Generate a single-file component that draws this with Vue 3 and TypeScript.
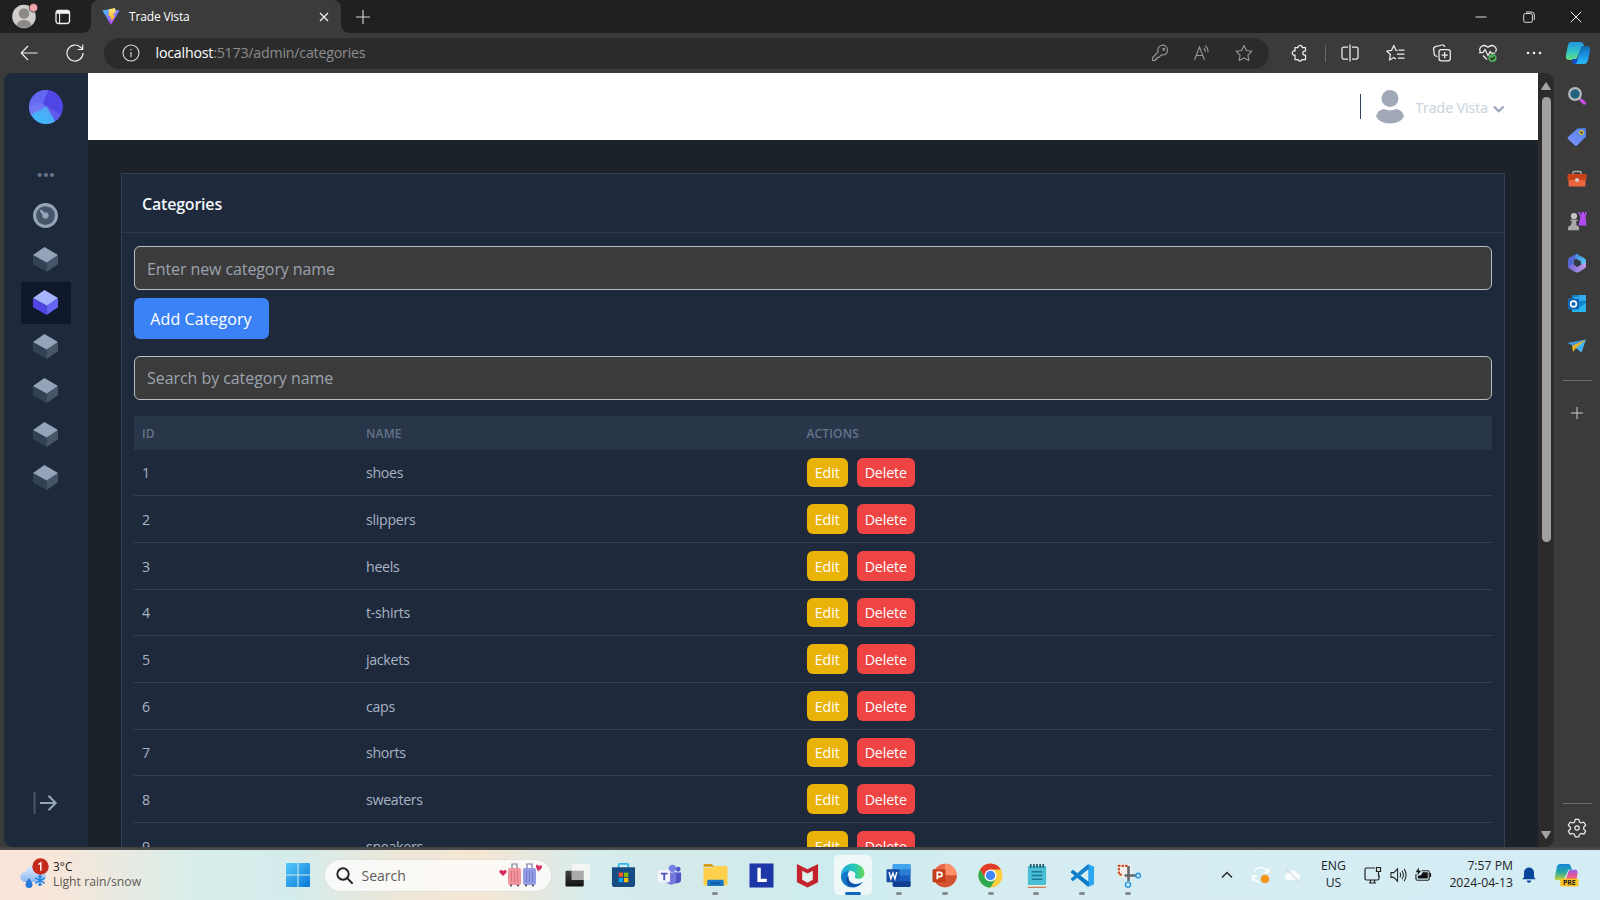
<script setup lang="ts">
interface Category {
  id: number
  name: string
}

const categories: Category[] = [
  'shoes', 'slippers', 'heels', 't-shirts', 'jackets', 'caps', 'shorts', 'sweaters', 'sneakers',
].map((name, index) => ({ id: index + 1, name }))

const navCubes = [false, true, false, false, false, false]
</script>

<template>
  <div class="screen">
    <header class="titlebar">
      <svg class="profile" width="26" height="26" viewBox="0 0 26 26">
        <circle cx="12" cy="13.5" r="11.8" fill="#d0cecc" />
        <circle cx="12" cy="10.5" r="5.2" fill="#8b8886" />
        <path d="M4.5 22.3a7.6 6.5 0 0 1 15 0 11.8 11.8 0 0 1-15 0z" fill="#8b8886" />
        <circle cx="21.5" cy="4.8" r="4.3" fill="#f1a5a8" stroke="#202020" stroke-width=".7" />
      </svg>
      <svg class="workspaces" width="16" height="16" viewBox="0 0 16 16" fill="none" stroke="#f1f1f1">
        <rect x="1" y="1.5" width="13.5" height="13" rx="2.4" stroke-width="1.3" />
        <path d="M1.5 3.2h12.5" stroke-width="3.2" />
        <path d="M4.6 4v10.5" stroke-width="1.1" />
      </svg>
      <div class="tab">
        <svg width="18" height="18" viewBox="0 0 18 18">
          <defs>
            <linearGradient id="viteBase" x1="0" y1="0" x2=".6" y2="1"><stop stop-color="#41d1ff" /><stop offset="1" stop-color="#bd34fe" /></linearGradient>
            <linearGradient id="viteBolt" x1="0" y1="0" x2="0" y2="1"><stop stop-color="#ffea83" /><stop offset="1" stop-color="#ffa800" /></linearGradient>
          </defs>
          <path d="M.4 2.5 9 1l8.6 1.5L9 17z" fill="url(#viteBase)" />
          <path d="M13 0 7 1.2 6.5 8l2-.3-.5 3 1.8-.5-.6 4 4-6.8-2 .4.8-3 1.8-.4z" fill="url(#viteBolt)" />
        </svg>
        <span class="tab-title">Trade Vista</span>
        <svg class="tab-close" width="10" height="10" viewBox="0 0 10 10"><path d="m1 1 8 8M9 1 1 9" stroke="#f1f1f1" stroke-width="1.3" /></svg>
      </div>
      <svg class="new-tab" width="16" height="16" viewBox="0 0 16 16"><path d="M1 8h14M8 1v14" stroke="#d5d5d5" stroke-width="1.1" /></svg>
      <div class="window-controls">
        <svg width="12" height="12" viewBox="0 0 12 12"><path d="M.5 6h11" stroke="#ddd" /></svg>
        <svg width="12" height="12" viewBox="0 0 12 12" fill="none" stroke="#ddd"><rect x=".7" y="2.6" width="8.7" height="8.7" rx="1.6" /><path d="M3 1h5.5a2.8 2.8 0 0 1 2.8 2.8V9" /></svg>
        <svg width="12" height="12" viewBox="0 0 12 12"><path d="m.7.7 10.6 10.6M11.3.7.7 11.3" stroke="#eee" /></svg>
      </div>
    </header>

    <nav class="toolbar">
      <svg class="back" width="18" height="16" viewBox="0 0 18 16" fill="none" stroke="#eee" stroke-width="1.2"><path d="M17.500 8H1.200M8 1 1.200 8 8 15" /></svg>
      <svg class="reload" width="18" height="18" viewBox="0 0 18 18" fill="none" stroke="#eee" stroke-width="1.2"><path d="M17 9A8 8 0 1 1 14.500 3.200L16.500 5.200M16.700.5v5h-5" /></svg>
      <div class="address">
        <svg class="info" width="18" height="18" viewBox="0 0 18 18" fill="none" stroke="#ddd" stroke-width="1.1"><circle cx="9" cy="9" r="8" /><path d="M9 8v5.200M9 5v1.300" /></svg>
        <span class="url"><b>localhost</b>:5173/admin/categories</span>
        <div class="address-icons">
          <svg width="18" height="18" viewBox="0 0 18 18"><path d="M10.500 10.800 7.700 13.500H6v1.700H4.300V16.500H1.500v-2.700L7.200 8A4.900 4.900 0 1 1 10.500 10.800z" /><circle cx="12.800" cy="5.200" r="1" /></svg>
          <svg width="18" height="18" viewBox="0 0 18 18"><path d="m1.500 16 5-13 5 13M3.300 11.500h6.500M10.800 4.200a4 4 0 0 1 1.400 3.800M12.200 1.800a7 7 0 0 1 2.700 6.600" /></svg>
          <svg width="18" height="18" viewBox="0 0 18 18"><path d="m9 1.500 2.400 5 5.400.8-3.900 3.800.9 5.400L9 13.900l-4.800 2.600.9-5.400L1.200 7.300l5.400-.8z" stroke-linejoin="round" /></svg>
        </div>
      </div>
      <div class="toolbar-icons">
        <svg class="i1" viewBox="0 0 18 18"><path d="M4 3.500h3a2.100 2.100 0 1 1 4.200 0h3.300V7h-.7a2 2 0 1 0 0 4h.7v4.500h-3.300a2.200 2.200 0 0 1-4.200 0H4V11a2.100 2.100 0 1 1 0-4z" stroke-linejoin="round" /></svg>
        <i class="separator" />
        <svg class="i2" viewBox="0 0 18 18"><path d="M7 3H2.800A1.800 1.800 0 0 0 1 4.800v8.400A1.800 1.800 0 0 0 2.800 15H7M11 3h4.200A1.800 1.800 0 0 1 17 4.800v8.400a1.800 1.800 0 0 1-1.800 1.800H11M9 .5v17" /></svg>
        <svg class="i3" viewBox="0 0 18 18"><path d="M10.500 6.500 9 6.300 6.800 1.500 4.600 6.300-.2 7l3.600 3.500L2.500 16l4.300-2.500L9 15M11.500 6h6M10 10h7.500M11 14h6.500" stroke-linejoin="round" /></svg>
        <svg class="i4" viewBox="0 0 18 18"><rect x="6" y="5.500" width="11.300" height="11.300" rx="2.300" /><path d="M11.700 8v6.200M8.600 11.100h6.200M4.500 12.500 2.800 12a2.200 2.200 0 0 1-1.500-1.700L.6 5.300A2.300 2.300 0 0 1 2.400 2.600L9 1a2.500 2.500 0 0 1 2.800 2" /></svg>
        <svg class="i5" viewBox="0 0 18 18"><path d="M1.500 8C-1 4 4-1 9 3.200 14-1 19 4 16.500 8M4 11.500l4 4M0 8.500h4L6 5.500l3 6 2.200-4 1 1.500h4" /><circle cx="13.500" cy="14" r="4.100" fill="#4fa957" stroke="none" /><path d="m11.500 14 1.500 1.500 2.700-2.800" stroke="#222" /></svg>
        <svg class="i6" viewBox="0 0 18 18"><g fill="#eee" stroke="none"><circle cx="3" cy="9" r="1.300" /><circle cx="9" cy="9" r="1.300" /><circle cx="15" cy="9" r="1.300" /></g></svg>
        <svg class="copilot" viewBox="0 0 26 24" stroke="none">
          <defs>
            <linearGradient id="copA" x1="0" y1="0" x2="0" y2="1"><stop stop-color="#2394e3" /><stop offset=".55" stop-color="#31c5c4" /><stop offset="1" stop-color="#68dc7e" /></linearGradient>
            <linearGradient id="copB" x1="0" y1="0" x2="0" y2="1"><stop stop-color="#1467a4" /><stop offset=".4" stop-color="#1689dc" /><stop offset="1" stop-color="#28bbf5" /></linearGradient>
          </defs>
          <path d="M6 1h10q2 0 2.700 3L20 7h-4l-4 10q-.8 2-3 2H4q-4 0-3-5L3 4q.7-3 3-3z" fill="url(#copA)" />
          <path d="M17 5h5q4 0 3 5l-2 9q-1 4-4 4H10q-2 0-3-4h3q2 0 3-3l2-7q.6-3 2-4z" fill="url(#copB)" />
          <path d="M7 18h4q1.500 0 2-2l-1 5q-.6 2-2 2-2.500 0-3-5z" fill="#1649c8" />
        </svg>
      </div>
    </nav>

    <div class="body">
      <div class="page">
        <aside class="side">
          <svg class="logo" viewBox="0 0 32 32">
            <defs>
              <linearGradient id="lgA" x1=".3" y1="0" x2=".7" y2="1"><stop stop-color="#a5b4fc" stop-opacity="0" /><stop offset="1" stop-color="#818cf8" /></linearGradient>
              <linearGradient id="lgB" x1="0" y1="1" x2="1" y2="0"><stop stop-color="#38bdf8" /><stop offset="1" stop-color="#5aa0f8" /></linearGradient>
              <clipPath id="logoClip"><circle cx="16" cy="16" r="16" /></clipPath>
            </defs>
            <g clip-path="url(#logoClip)">
              <path d="M0 0h32v32H0z" fill="#4f46e5" />
              <path d="M18.300 0 13 13 16 17 0 25V0z" fill="#6366f1" />
              <path d="m13 13 4 3L3 24 0 22V8z" fill="url(#lgA)" opacity=".55" />
              <path d="M13 12.500 32 25 26.500 30 16 16z" fill="#625bea" />
              <path d="M16.500 15.500 2 23.500 8 32h18.500z" fill="url(#lgB)" />
            </g>
          </svg>
          <div class="dots">•••</div>
          <div class="nav-item">
            <svg viewBox="0 0 24 24"><circle cx="12" cy="12" r="12" fill="#94a3b8" /><circle cx="12" cy="12" r="9" fill="#475569" /><path d="m6.300 7.400 1.100-1.100 5.600 4.200-2.500 2.500z" fill="#94a3b8" /><circle cx="12" cy="12" r="3" fill="#94a3b8" /></svg>
          </div>
          <div v-for="(active, i) in navCubes" :key="i" class="nav-item" :class="{ active }">
            <svg viewBox="0 0 24 24">
              <path class="cube-left" d="M0 7.700 13 15v9L0 16.500z" />
              <path class="cube-right" d="M24 8v8.500L13 24V14z" />
              <path class="cube-top" d="M0 7.700 11 0l13 7.700-11 7.200z" />
            </svg>
          </div>
          <svg class="expand" viewBox="0 0 25 24"><path d="M1.500 1v22" stroke="#475569" stroke-width="2" /><path d="M7 12h16M15.500 4.800l7.200 7.200-7.200 7.200" fill="none" stroke="#94a3b8" stroke-width="2.100" /></svg>
        </aside>

        <main class="main">
          <div class="topbar">
            <i class="rule" />
            <svg class="avatar" viewBox="0 0 28 34" fill="#a1a9b9"><circle cx="14" cy="8.500" r="8.500" /><path d="M0 26.500Q1.500 19.500 8 19q6 2.500 12 0 6.500.5 8 7.500-4 7-14 7T0 26.500z" /></svg>
            <span class="account">Trade Vista</span>
            <svg class="chevron" viewBox="0 0 12 8"><path d="m1 1.300 5 5 5-5" fill="none" stroke="#94a3b8" stroke-width="2.200" /></svg>
          </div>
          <section class="card">
            <h2><span>Categories</span></h2>
            <div class="card-body">
              <input type="text" class="new-name" placeholder="Enter new category name" />
              <button class="add"><span>Add Category</span></button>
              <input type="text" class="search-name" placeholder="Search by category name" />
              <div class="thead row-grid"><span>ID</span><span>NAME</span><span>ACTIONS</span></div>
              <div v-for="c in categories" :key="c.id" class="row row-grid">
                <span>{{ c.id }}</span>
                <span>{{ c.name }}</span>
                <span class="actions"><button class="edit">Edit</button><button class="delete">Delete</button></span>
              </div>
            </div>
          </section>
        </main>

        <div class="scrollbar">
          <svg viewBox="0 0 10 8"><path d="M5 .5 9.500 7.500H.5z" fill="#a3a3a3" stroke="#a3a3a3" stroke-linejoin="round" /></svg>
          <i class="thumb" />
          <svg class="down" viewBox="0 0 10 8"><path d="M5 7.500 9.500.5H.5z" fill="#a3a3a3" stroke="#a3a3a3" stroke-linejoin="round" /></svg>
        </div>
      </div>

      <aside class="edgebar">
        <svg viewBox="0 0 20 20"><circle cx="8" cy="8" r="5.800" fill="#24617f" stroke="#b4babd" stroke-width="2.200" /><path d="m12 12 2 2" stroke="#aaa" stroke-width="2" /><path d="m14.500 14.500 2.800 2.500" stroke="#cb48eb" stroke-width="3.400" stroke-linecap="round" /></svg>
        <svg viewBox="0 0 20 20"><defs><linearGradient id="tagG" x1="1" y1="0" x2="0" y2="1"><stop stop-color="#4e80e7" /><stop offset="1" stop-color="#8195ff" /></linearGradient></defs><path d="M10.500 1.500 17.500 1q1.500 0 1.500 1.500V9.500L10 18.500q-1 1-2 0L1 12q-1-1 0-2z" fill="url(#tagG)" /><circle cx="14.500" cy="5.500" r="1.900" fill="#343b63" stroke="#e5c52e" stroke-width="1.200" /></svg>
        <svg viewBox="0 0 20 20"><path d="M6 5V3.500q0-1 1-1h6q1 0 1 1V5" fill="none" stroke="#aaa" stroke-width="1.500" /><rect x="1.500" y="10" width="17" height="7.500" rx="1" fill="#e9663e" /><rect x=".5" y="5" width="19" height="6" rx="1" fill="#c9421b" /><circle cx="10" cy="11" r="2" fill="#d6cbc5" /></svg>
        <svg viewBox="0 0 20 20"><path d="M11 1h2v2h1.500V1H17v2h1V1h2l-1.500 5 1 8.500h-8l2-8.500z" fill="#b14cf5" /><circle cx="7" cy="5" r="3.100" fill="#c5c3c1" /><path d="M3.500 8.500h7v1.800H9l.5 3.700 2.500 2v3.300H1V16l3-2 1-3.700H3.500z" fill="#aba9a7" /></svg>
        <svg viewBox="0 0 20 20">
          <defs><linearGradient id="mG" x1="0" y1="0" x2="1" y2="1"><stop stop-color="#3f83dc" /><stop offset="1" stop-color="#5cd6f9" /></linearGradient><linearGradient id="mP" x1="0" y1="0" x2="1" y2="0"><stop stop-color="#6b66d6" /><stop offset="1" stop-color="#c49ae6" /></linearGradient></defs>
          <path d="M10 .5 2.500 4.500Q1 5.500 1 7.500V13q0 1.500 1.500 2L7 12.500V7l6-3.500z" fill="#5468cf" />
          <path d="M9.500.8 17 5q2 1 2 3v5l-5-1.500V8.500L7.500 5z" fill="url(#mG)" />
          <path d="M1 13.500 7 11l3 2.500 9-4V13q0 1.500-1.500 2.500L12 19q-2 1-4 0l-5.500-3.200Q1 15 1 13.500z" fill="url(#mP)" />
          <path d="m10 6.500 3.200 2v3.500L10 14l-3-2V8.500z" fill="#343944" />
        </svg>
        <svg viewBox="0 0 20 20"><rect x="5" y="1" width="14" height="14" rx="1.200" fill="#1682cc" /><path d="M7 3h5v5H7z" fill="#35b6ee" /><path d="M12 1h7v6h-7z" fill="#33aaf0" /><path d="M5 18V9l7 5 7-5v9z" fill="#28b5ee" /><rect x="1" y="4.500" width="11" height="11" rx="1" fill="#0f66b8" /><circle cx="6.500" cy="10" r="2.900" fill="none" stroke="#fff" stroke-width="1.600" /></svg>
        <svg viewBox="0 0 20 20"><path d="M1 7 19 3.500 8 11z" fill="#3187d9" /><path d="M8 11 19 3.500 14.500 16.500 9.500 12.500z" fill="#45b3f3" /><path d="M1 7 19 3.500 4.500 9z" fill="#4a9cdb" /><path d="M5 9.800 19 3.500 9 12l-3 4z" fill="#e9b525" /></svg>
        <hr />
        <svg class="add-app" viewBox="0 0 20 20"><path d="M4 10h12M10 4v12" stroke="#ccc" /></svg>
        <hr class="bottom-rule" />
        <svg class="gear" viewBox="0 0 20 20" fill="none" stroke="#eee" stroke-width="1.200" stroke-linejoin="round"><path d="m8.200 1.300 3.600 0 .7 2.700 1.700 1 2.700-.8 1.800 3.100-2 1.900v2l2 1.900-1.800 3.100-2.700-.8-1.700 1-.7 2.500H8.200L7.500 16.400l-1.700-1-2.700.8-1.800-3.100 2-1.900v-2l-2-1.900 1.800-3.100 2.700.8 1.700-1z" /><circle cx="10" cy="10" r="2.200" /></svg>
      </aside>
    </div>

    <footer class="taskbar">
      <div class="weather">
        <svg width="30" height="32" viewBox="0 0 30 32">
          <defs><linearGradient id="cloudG" x1="0" y1="0" x2="0" y2="1"><stop stop-color="#e0edff" /><stop offset="1" stop-color="#8db8ef" /></linearGradient></defs>
          <path d="M5 24a5 5 0 0 1 .5-10 8.500 8.500 0 0 1 16-1.500 6 6 0 0 1 0 11.500z" fill="url(#cloudG)" />
          <path d="M9 19c2 3 3.500 4.500 3.500 6.500a3.500 3.500 0 0 1-7 0C5.500 23.500 7 22 9 19z" fill="#2879dc" transform="translate(0 1)" />
          <path d="M20 17v11M15.300 19.800l9.400 5.500M15.300 25.300l9.400-5.500M18.200 18l1.800 1.600 1.800-1.600M18.200 27.200l1.800-1.600 1.800 1.600" stroke="#1d82e0" stroke-width="1.400" fill="none" />
          <circle cx="20.500" cy="8.500" r="8.200" fill="#c42b1c" />
          <path d="m18.300 6.500 2.500-1.700v8" fill="none" stroke="#fff" stroke-width="1.400" />
        </svg>
        <div><p>3°C</p><p class="sub">Light rain/snow</p></div>
      </div>
      <svg class="start" viewBox="0 0 24 24"><defs><linearGradient id="winG" x1="0" y1="0" x2="1" y2="1"><stop stop-color="#55cafa" /><stop offset="1" stop-color="#0878d8" /></linearGradient></defs><path d="M1 0h10.500v11.500H0V1q0-1 1-1zm11.500 0H23q1 0 1 1v10.500H12.500zM0 12.500h11.500V24H1q-1 0-1-1zm12.500 0H24V23q0 1-1 1H12.500z" fill="url(#winG)" /></svg>
      <div class="search">
        <svg width="17" height="17" viewBox="0 0 17 17" fill="none" stroke="#222" stroke-width="1.900"><circle cx="7" cy="7" r="5.700" /><path d="m11.200 11.200 4.800 4.800" stroke-linecap="round" /></svg>
        <span>Search</span>
        <svg class="luggage" width="44" height="26" viewBox="0 0 44 26">
          <path d="M4 14 1 11q-1.500-2 .5-3Q3 7.500 4 9q2-2 3.500 0 .5 1-.5 2z" fill="#d92e5c" />
          <path d="M39 9.500 37 5q-.5-2 1-2.500 1 0 1.800 1.500 2.500-1.500 3.200.5.200 1.500-1 2.500z" fill="#d92e5c" />
          <path d="M13 6V2h5v4M28 6V2h5v4" fill="none" stroke="#777ba0" stroke-width="1.200" />
          <rect x="9" y="6" width="13" height="17" rx="2" fill="#f0959d" /><rect x="24" y="6" width="13" height="17" rx="2" fill="#949ce2" />
          <path d="M12.500 9v11M15.500 9v11M18.500 9v11" stroke="#d9737f" /><path d="M27.500 9v11M30.500 9v11M33.500 9v11" stroke="#727bcb" />
          <path d="M11 23.500h2M18 23.500h2M26 23.500h2M33 23.500h2" stroke="#444" stroke-width="1.500" />
        </svg>
      </div>
      <div class="apps">
        <div class="app"><svg viewBox="0 0 26 26"><defs><linearGradient id="tvG" x1="0" y1="0" x2="0" y2="1"><stop stop-color="#444" /><stop offset="1" stop-color="#111" /></linearGradient></defs><rect x=".5" y="8" width="19" height="16.500" rx="1" fill="url(#tvG)" /><rect x="7" y="1" width="19" height="16.500" rx="1" fill="#f7f7f7" opacity=".9" /><path d="M7 8h12.500v9.500H7z" fill="#aaa" /></svg></div>
        <div class="app"><svg viewBox="0 0 26 26"><path d="M8 5V2q0-1 1-1h8q1 0 1 1v3" fill="none" stroke="#2db4ed" stroke-width="1.800" /><path d="M1 4.500h24V22q0 3-3 3H4q-3 0-3-3z" fill="#164b83" /><path d="M8 10h4.500v4.500H8z" fill="#f35325" /><path d="M13.500 10H18v4.500h-4.500z" fill="#81bc06" /><path d="M8 15.500h4.500V20H8z" fill="#05a6f0" /><path d="M13.500 15.500H18V20h-4.500z" fill="#ffba08" /></svg></div>
        <div class="app"><svg viewBox="0 0 26 26"><circle cx="16" cy="5.500" r="3.800" fill="#7680e5" /><circle cx="22" cy="6.500" r="2.500" fill="#5059c9" /><path d="M17 10h8v7q0 4-4 4h-4z" fill="#4e56c7" /><path d="M9 10h11v7q0 5-5 5.500-4 0-6-4z" fill="#7479df" /><rect x="1" y="7.500" width="12.500" height="12.500" rx="1" fill="#f5f5ff" /><path d="M4 11h7M7.500 11v7" stroke="#4d54bd" stroke-width="1.900" /></svg></div>
        <div class="app open"><svg viewBox="0 0 26 26"><path d="M.5 2.500q0-1.500 1.500-1.500h7l3 3h-11.500z" fill="#d99b13" /><path d="M.5 5h9l2.500-2h12q1.500 0 1.500 1.500V22q0 1.500-1.500 1.500H2Q.5 23.500.5 22z" fill="#ffd04b" /><path d="M4.500 24v-5q0-1.500 1.500-1.500h14q1.500 0 1.500 1.500v5z" fill="#1977c8" /><path d="M8 21h10" stroke="#115393" stroke-width="1.500" /></svg></div>
        <div class="app"><svg viewBox="0 0 26 26"><path d="M.5.500h25v25H.500z" fill="#1d36a8" /><path d="M10.500 5v13h8" fill="none" stroke="#fff" stroke-width="3.500" /></svg></div>
        <div class="app"><svg viewBox="0 0 26 26"><path d="m2 1 11 5.500L24 1v19l-11 5.500L2 20z" fill="#c3232c" /><path d="m7.500 8 5.500 3 5.500-3v9.500L13 20.500l-5.500-3z" fill="#e0f1ef" /></svg></div>
        <div class="app open current"><svg viewBox="0 0 26 26"><defs><linearGradient id="edgeG" x1="0" y1="0" x2="1" y2="0"><stop stop-color="#1fa4de" /><stop offset=".6" stop-color="#28c8b4" /><stop offset="1" stop-color="#69d855" /></linearGradient></defs><path d="M1 13A12.500 12.500 0 0 1 13.500.5C20 .5 25.500 5 25.500 10.500c0 4-3 6-6 6-3.500 0-5-1.500-3.500-3.500C17 10 13 8 10 8c-5 0-9 3-9 8z" fill="url(#edgeG)" /><path d="M1 14c1-4 5-6.500 9-6-3 3-2 9 1 12 4 3 9 2 12.500-.5C20.500 24 17 25.500 13 25.500 6 25.500 1 20 1 14z" fill="#1279ca" /><path d="M9 13.500c-1 5 3 10 10 8.500l4-2c-3 4-8 6-13 4-5-3-4-9-1-10.500z" fill="#124fa0" /></svg></div>
        <div class="app open"><svg viewBox="0 0 26 26"><rect x="7" y="1" width="18.500" height="24" rx="1.500" fill="#185abd" /><path d="M7 7V2.500Q7 1 8.500 1H24q1.500 0 1.500 1.500V7z" fill="#41a5ee" /><path d="M7 7h18.500v6H7z" fill="#2b7cd3" /><path d="M7 19h18.500v4.500q0 1.500-1.500 1.500H8.500Q7 25 7 23.500z" fill="#103f91" /><rect x=".5" y="6.500" width="13.500" height="13.500" rx="1" fill="#174ca5" /><path d="m3.200 9.500 1.900 7 2.100-6 2.100 6 1.900-7" fill="none" stroke="#fff" stroke-width="1.500" /></svg></div>
        <div class="app open"><svg viewBox="0 0 26 26"><circle cx="13.500" cy="13" r="12.200" fill="#e9694a" /><path d="M13.500.8A12.200 12.200 0 0 1 25.700 13H13.500z" fill="#ff8f6b" /><path d="M1.300 13h24.400a12.200 12.200 0 0 1-24.400 0z" fill="#d35230" /><rect x=".5" y="6.500" width="13.500" height="13.500" rx="1" fill="#c43e1c" /><path d="M5.500 17V9.700h2.700a2 2 0 0 1 0 4.500H5.500" fill="none" stroke="#fff" stroke-width="1.700" /></svg></div>
        <div class="app open"><svg viewBox="0 0 26 26"><circle cx="13" cy="13" r="12.500" fill="#ffcd40" /><path d="M2.200 6.700a12.500 12.500 0 0 1 21.600 0H13l-5.400 9.400z" fill="#e33b2e" /><path d="M2.200 6.700a12.500 12.500 0 0 0 10.800 18.800l5.400-9.400H7.600z" fill="#2da94f" /><circle cx="13" cy="13" r="6.200" fill="#fff" /><circle cx="13" cy="13" r="4.900" fill="#4285f4" /></svg></div>
        <div class="app open"><svg viewBox="0 0 26 26"><rect x="4" y="3" width="19" height="20" rx="1.500" fill="#49bfd6" /><path d="M4 23h19v2.500H4z" fill="#f2eee8" /><path d="M4 25.200h19" stroke="#b35b26" /><path d="M7 1v4M10.300 1v4M13.500 1v4M16.800 1v4M20 1v4" stroke="#24586b" stroke-width="1.800" /><path d="M8 9h11M8 13h11M8 17h11" stroke="#1c7896" stroke-width="1.600" /></svg></div>
        <div class="app open"><svg viewBox="0 0 26 26"><path d="m19 1 6 3v18l-6 3z" fill="#2aa6f2" /><path d="m.800 9 2.200-2 17 13-1 5L1 10z" fill="#0879c5" /><path d="m.800 17 2.200 2L20 6l-1-5L1 16z" fill="#1681cc" /><path d="m18.500 7.500-7 5.500 7 5.500z" fill="#d3eff4" /></svg></div>
        <div class="app open"><svg viewBox="0 0 26 26"><rect x="2" y="1" width="14" height="14" rx="1" fill="#f3eeea" /><path d="M12 3H3v9h3" fill="none" stroke="#c94a22" stroke-width="2.300" stroke-dasharray="2.500 1.200" /><path d="M13 3v16M9 13h12" stroke="#60666b" stroke-width="2.600" /><circle cx="12.500" cy="22.500" r="2.600" fill="none" stroke="#2498e0" stroke-width="1.500" /><circle cx="23" cy="13" r="2.400" fill="none" stroke="#2498e0" stroke-width="1.500" /></svg></div>
      </div>
      <div class="tray">
        <svg class="t-up" viewBox="0 0 12 8"><path d="m1 6.500 5-5 5 5" fill="none" stroke="#222" stroke-width="1.400" /></svg>
        <svg class="t-sync" viewBox="0 0 20 20" fill="none" stroke="#fff" stroke-width="1.300"><path d="M17 7.500A7.800 7.800 0 0 0 3 6.500M17.500 2.500v5h-5M2 11a7.800 7.800 0 0 0 6 6M1.500 16v-5h5" /><circle cx="14" cy="14" r="4.300" fill="#f7941d" stroke="none" /></svg>
        <svg class="t-cloud" viewBox="0 0 20 20"><path d="M5 15.500a4 4 0 0 1 0-8 6 6 0 0 1 10.500 1 3.600 3.600 0 0 1 0 7z" fill="#f8fbfc" /><path d="m2 3 14 14" stroke="#cbd8dc" stroke-width="1.200" /></svg>
        <div class="lang"><p>ENG</p><p>US</p></div>
        <svg class="t-net" viewBox="0 0 18 18" fill="none" stroke="#222" stroke-width="1.200"><path d="M11 2H2.500Q1 2 1 3.500v9Q1 14 2.500 14h11q1.500 0 1.500-1.500V9M5 17h7M6.500 14v3M10.500 14v3" /><path d="M12.500 1.500h4v4h-4zM14.500 5.500v5" /></svg>
        <svg class="t-vol" viewBox="0 0 18 18" fill="none" stroke="#222" stroke-width="1.100"><path d="M1 6.500h3l4-4v13l-4-4H1zM10.500 6.500q1.500 2.500 0 5M12.700 4.500q3 4.500 0 9M15 2.500q4 6.500 0 13" /></svg>
        <svg class="t-bat" viewBox="0 0 18 18"><path d="M1 8v5q0 1.500 1.500 1.500h11q1.500 0 1.500-1.500V6q0-1.500-1.500-1.500H7" fill="none" stroke="#222" stroke-width="1.200" /><path d="M3 10v2.800h10.500V6H8L6.500 9zM15.500 7h1.500v4h-1.500zM4 1 .8 6h2.400L2.500 9.500 6.500 4.500H4z" fill="#111" /></svg>
        <div class="clock"><p>7:57 PM</p><p>2024-04-13</p></div>
        <svg class="t-bell" viewBox="0 0 14 16"><path d="M7 .5a5 5 0 0 1 5 5V10l1.700 2.300H.3L2 10V5.500a5 5 0 0 1 5-5zM4.800 13.500h4.400a2.200 2.200 0 0 1-4.400 0z" fill="#06459c" /></svg>
        <svg class="t-pre" viewBox="0 0 26 26"><defs><linearGradient id="preA" x1="0" y1="0" x2="0" y2="1"><stop stop-color="#1685db" /><stop offset=".5" stop-color="#25a8a0" /><stop offset="1" stop-color="#c8d43a" /></linearGradient><linearGradient id="preB" x1="0" y1="0" x2="0" y2="1"><stop stop-color="#8f62e8" /><stop offset=".5" stop-color="#e6559a" /><stop offset="1" stop-color="#f78c4d" /></linearGradient></defs><path d="M6 1h9q2 0 3 4l1 2h-4l-4 9q-1 2-3 2H3q-3 0-2-4L3 4q.8-3 3-3z" fill="url(#preA)" /><path d="M17 7h5q3 0 2.500 4L23 19H10q2-1 3-4l2-6q.8-2 2-2z" fill="url(#preB)" /><rect x="6.500" y="16.500" width="19" height="8" rx="1.500" fill="#ffc21f" /><text x="16" y="23.300" text-anchor="middle" font-size="7.200" font-weight="700" font-family="Noto Sans, sans-serif" fill="#222">PRE</text></svg>
      </div>
    </footer>
  </div>
</template>

<style>
html, body { margin: 0; background: #3b3b3b; overflow: hidden; }
</style>

<style scoped>
* { box-sizing: border-box; }
p, h2 { margin: 0; }
svg { display: block; flex: none; }
.screen { width: 1600px; height: 900px; display: flex; flex-direction: column; overflow: hidden; background: #3b3b3b; font-family: "Open Sans", "Noto Sans", sans-serif; }

.titlebar { height: 33px; flex: none; display: flex; align-items: center; background: #202020; }
.profile { margin: 0 0 1px 11.5px; }
.workspaces { margin-left: 17.5px; }
.tab { position: relative; margin-left: 20px; width: 250px; height: 33px; padding: 0 12px 0 11px; display: flex; align-items: center; background: #3b3b3b; border-radius: 8px 8px 0 0; color: #fff; }
.tab::before, .tab::after { content: ""; position: absolute; bottom: 0; width: 8px; height: 8px; }
.tab::before { left: -8px; background: radial-gradient(circle at 0 0, transparent 7.5px, #3b3b3b 8px); }
.tab::after { right: -8px; background: radial-gradient(circle at 100% 0, transparent 7.5px, #3b3b3b 8px); }
.tab-title { margin-left: 9px; font-size: 12px; letter-spacing: -.15px; }
.tab-close { margin-left: auto; }
.new-tab { margin-left: 14px; }
.window-controls { margin-left: auto; margin-right: 18px; display: flex; gap: 35.5px; }

.toolbar { height: 40px; flex: none; display: flex; align-items: center; background: #3b3b3b; }
.back { margin-left: 20px; }
.reload { margin-left: 28px; }
.address { margin-left: 20px; width: 1165px; height: 31px; border-radius: 16px; display: flex; align-items: center; background: #2b2b2b; }
.info { margin-left: 18px; }
.url { margin-left: 15.5px; font-size: 14.2px; color: #8d8d8d; letter-spacing: -.2px; line-height: 20px; }
.url b { font-weight: 400; color: #fff; }
.address-icons { margin-left: auto; margin-right: 16px; display: flex; gap: 24px; fill: none; stroke: #999; stroke-width: 1.1; }
.toolbar-icons { flex: 1; display: flex; align-items: center; fill: none; stroke: #eee; stroke-width: 1.25; }
.toolbar-icons svg { width: 18px; height: 18px; overflow: visible; }
.i1 { margin-left: 22px; }
.separator { width: 1px; height: 17px; background: #666; margin-left: 15.5px; }
.i2 { margin-left: 15px; }
.i3, .i4, .i5, .i6 { margin-left: 28px; }
.toolbar-icons .copilot { width: 26px; height: 24px; margin-left: 22px; }

.body { height: 777px; flex: none; display: flex; padding: 0 0 3.5px 4px; background: linear-gradient(#3b3b3b 773px, #4c4c4e 776px); }
.page { width: 1550px; display: flex; border-radius: 9px; overflow: hidden; background: #1c2229; }
.side { width: 83.5px; display: flex; flex-direction: column; align-items: center; background: #1e293b; }
.logo { width: 34px; height: 34px; margin-top: 16.5px; }
.dots { margin-top: 39px; height: 24px; line-height: 24px; font-size: 12.5px; font-weight: 600; color: #64748b; letter-spacing: -.2px; font-family: Inter, sans-serif; }
.nav-item { width: 50px; height: 41.6px; display: flex; align-items: center; justify-content: center; border-radius: 2px; margin-bottom: 2.1px; }
.dots + .nav-item { margin-top: 8px; margin-bottom: 2.4px; }
.nav-item svg { width: 25px; height: 25px; }
.nav-item.active { background: #0f172a; }
.cube-left { fill: #334155; } .cube-right { fill: #475569; } .cube-top { fill: #94a3b8; }
.active .cube-left { fill: #4f46e5; } .active .cube-right { fill: #6366f1; } .active .cube-top { fill: #a5b4fc; }
.expand { width: 25px; height: 24px; margin-top: auto; margin-bottom: 31.5px; }

.main { width: 1450.5px; display: flex; flex-direction: column; overflow: hidden; }
.topbar { height: 66.8px; flex: none; display: flex; align-items: center; justify-content: flex-end; background: #fff; padding: .7px 34px 0 0; }
.rule { width: 1.5px; height: 25px; background: #334155; }
.avatar { width: 28px; height: 34px; margin-left: 15px; }
.account { margin-left: 11px; font-size: 14px; font-weight: 500; color: #cbd5e1; line-height: 20px; margin-top: 2px; -webkit-text-stroke: .2px #cbd5e1; }
.chevron { width: 11.5px; height: 8px; margin-left: 4.5px; margin-top: 4px; }
.card { width: 1384px; height: 900px; margin: 33.2px 0 0 33px; border: 1px solid #334155; background: #1e293b; flex: none; }
.card h2 { height: 59.3px; padding-left: 20.5px; display: flex; align-items: center; font-size: 16px; font-weight: 600; color: #f1f5f9; border-bottom: 1px solid #2d3a4d; letter-spacing: -.2px; padding-top: 2px; }
.card-body { padding: 13px 12px; display: flex; flex-direction: column; }
.card input { height: 43.5px; width: 1358px; border: 1px solid #b9bdc4; border-radius: 6px; background: #3b3b3b; padding: 1px 12.5px 0; font: 400 16px "Open Sans", "Noto Sans", sans-serif; letter-spacing: -.1px; color: #fff; outline: none; }
.card input::placeholder { color: #9ca3af; opacity: 1; }
button { border: 0; font-family: inherit; color: #fff; padding: 0; }
.add { width: 135px; height: 41.5px; margin-top: 8.2px; border-radius: 6px; background: #3b82f6; font-size: 16px; letter-spacing: .08px; padding-top: 1px; }
.card .search-name { margin-top: 16.7px; letter-spacing: -.06px; }
.row-grid { width: 1358px; display: grid; grid-template-columns: 224px 440.5px 1fr; align-items: center; padding-left: 8.5px; }
.thead { height: 33.3px; margin-top: 16.7px; background: #293548; color: #64748b; font-size: 12px; font-weight: 600; letter-spacing: .15px; padding-top: 1px; }
.row { height: 46.67px; border-bottom: 1px solid #334155; color: #a8b3c4; font-size: 14.2px; letter-spacing: -.3px; }
.row > span { padding-top: 1px; }
.row > .actions { display: flex; gap: 8.5px; padding-top: 0; }
.edit, .delete { height: 29.5px; border-radius: 6px; font-size: 14.2px; padding-top: 1px; }
.edit { width: 41.5px; background: #eab308; }
.delete { width: 58.5px; background: #ef4444; letter-spacing: -.1px; }

.scrollbar { width: 16px; display: flex; flex-direction: column; align-items: center; background: #2b2b2b; padding: 8.8px 0 8px; }
.scrollbar svg { width: 10px; height: 8px; }
.thumb { width: 9px; height: 445px; margin-top: 7px; border-radius: 5px; background: #a0a0a0; }
.scrollbar .down { margin-top: auto; }

.edgebar { width: 46px; display: flex; flex-direction: column; align-items: center; padding-top: 12.5px; gap: 21.8px; }
.edgebar svg { width: 20px; height: 20px; }
.edgebar hr { width: 29px; height: 1px; border: 0; margin: 2px 0 0; background: #6b6b6b; flex: none; }
.edgebar .bottom-rule { margin-top: auto; }
.edgebar .gear { margin: -8.5px 0 9px; }

.taskbar { position: relative; height: 50px; flex: none; display: flex; align-items: center; background: linear-gradient(90deg, #fae5d9 0, #f8e6d9 55px, #d9eeea 190px, #d3ecec 290px, #eee7d8 400px, #f5e6d3 480px, #d7ecec 590px, #d4eaea 690px, #cdecee 830px, #d5edf1 1000px, #d4edf5 1600px); }
.weather { width: 286px; padding: 0 0 2px 20px; display: flex; align-items: center; font-size: 11.9px; line-height: 16.5px; color: #222; }
.weather div { margin: 0 0 0 3px; }
.weather .sub { color: #5c5856; font-size: 12.2px; letter-spacing: .02px; }
.start { width: 24px; height: 24px; }
.search { margin-left: 14px; width: 228px; height: 33px; border-radius: 17px; background: rgba(255, 255, 255, .75); border: 1px solid rgba(215, 215, 210, .7); display: flex; align-items: center; padding-left: 10.5px; padding-right: 8px; font-size: 14px; color: #5c5a58; }
.search span { margin-left: 9px; }
.luggage { margin-left: auto; }
.apps { margin-left: 3px; display: flex; height: 50px; }
.app { position: relative; width: 45.85px; display: flex; align-items: center; justify-content: center; }
.app svg { width: 25px; height: 25px; position: relative; }
.app.open::after { content: ""; position: absolute; left: 50%; bottom: 5px; width: 6px; height: 3px; margin-left: -3px; border-radius: 2px; background: #858b8e; }
.app.current::before { content: ""; position: absolute; left: 4px; top: 5px; width: 38px; height: 40px; border-radius: 5px; background: rgba(255, 255, 255, .65); }
.app.current::after { width: 16px; margin-left: -8px; background: #0f67bc; }
.tray { flex: 1; display: flex; align-items: center; padding-left: 70px; font-size: 12.2px; line-height: 16.7px; color: #222; }
.tray .lang p, .tray .clock p { position: static; }
.t-up { width: 12px; height: 8px; margin-right: 18.5px; }
.t-sync { width: 20px; height: 20px; margin-right: 13px; }
.t-cloud { width: 18px; height: 18px; margin-right: 18px; }
.lang { width: 26px; text-align: center; margin-right: 17.5px; padding-bottom: 1px; }
.t-net { width: 18px; height: 18px; margin-right: 8px; }
.t-vol { width: 17px; height: 18px; margin-right: 8px; }
.t-bat { width: 17px; height: 18px; margin-right: 10px; }
.clock { width: 71px; display: flex; flex-direction: column; align-items: flex-end; margin-right: 9px; white-space: nowrap; padding-bottom: 1px; }
.t-bell { width: 14px; height: 16px; margin-right: 18px; }
.t-pre { width: 25px; height: 25px; }
</style>
